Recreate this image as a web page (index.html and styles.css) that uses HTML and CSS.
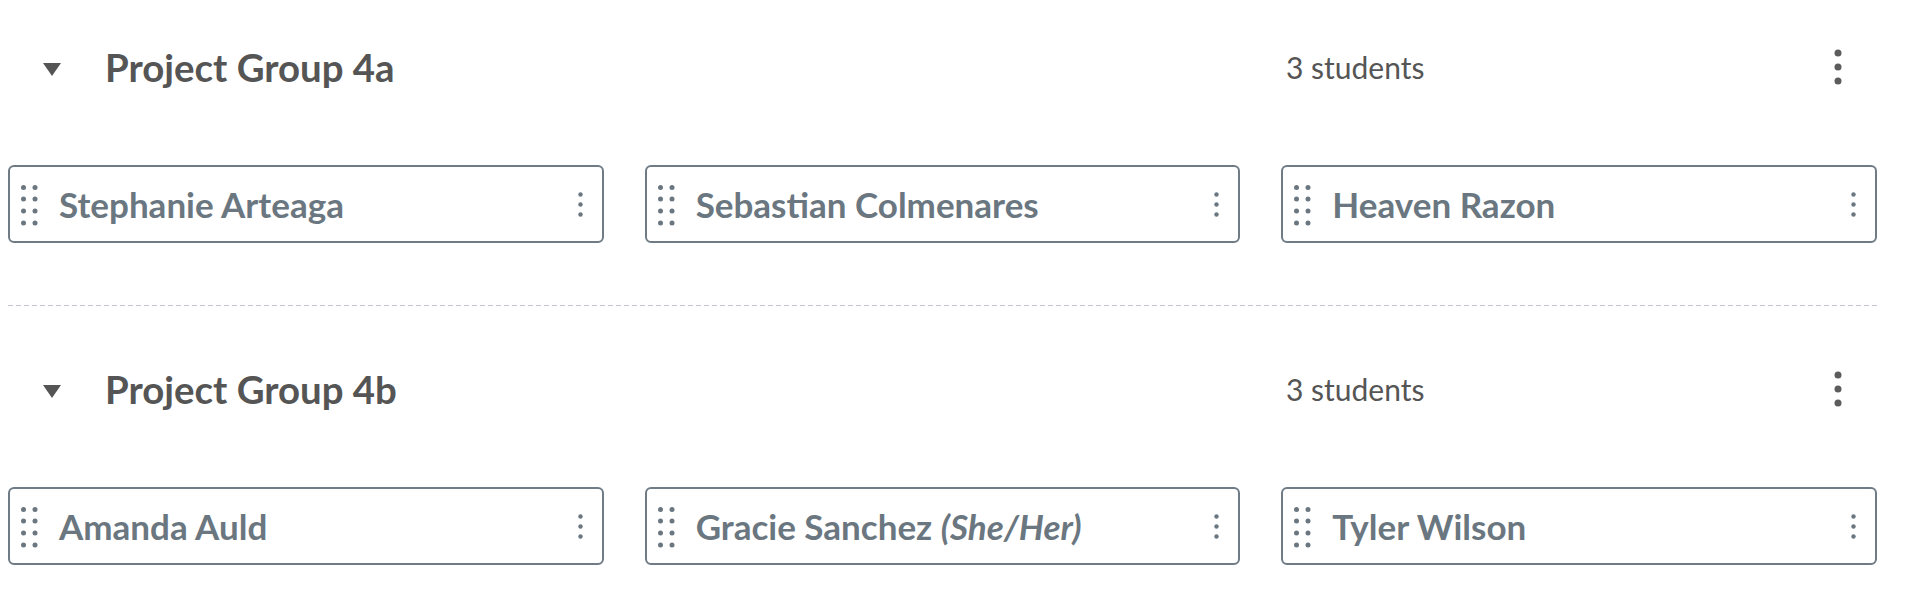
FILE: index.html
```html
<!DOCTYPE html>
<html lang="en">
<head>
<meta charset="utf-8">
<title>Groups</title>
<link rel="stylesheet" href="styles.css">
</head>
<body>
<div class="groups">
  <section class="group">
    <div class="group-header">
      <span class="toggle"><svg width="18" height="13" viewBox="0 0 18 13"><path d="M0 0H18L9 13Z" fill="#555"/></svg></span>
      <h2 class="group-title">Project Group 4a</h2>
      <span class="count">3 students</span>
      <span class="kebab-lg"><svg width="8" height="36" viewBox="0 0 8 36"><circle cx="4" cy="4" r="3.5"/><circle cx="4" cy="18" r="3.5"/><circle cx="4" cy="32" r="3.5"/></svg></span>
    </div>
    <div class="members">
      <div class="member">
        <span class="handle"><svg width="17" height="41" viewBox="0 0 17 41"><circle cx="2.5" cy="2.5" r="2.5"/><circle cx="14" cy="2.5" r="2.5"/><circle cx="2.5" cy="14" r="2.5"/><circle cx="14" cy="14" r="2.5"/><circle cx="2.5" cy="26" r="2.5"/><circle cx="14" cy="26" r="2.5"/><circle cx="2.5" cy="38" r="2.5"/><circle cx="14" cy="38" r="2.5"/></svg></span>
        <span class="name">Stephanie Arteaga</span>
        <span class="kebab-sm"><svg width="5" height="25" viewBox="0 0 5 25"><circle cx="2.5" cy="2.5" r="2.2"/><circle cx="2.5" cy="12.5" r="2.2"/><circle cx="2.5" cy="22.5" r="2.2"/></svg></span>
      </div>
      <div class="member">
        <span class="handle"><svg width="17" height="41" viewBox="0 0 17 41"><circle cx="2.5" cy="2.5" r="2.5"/><circle cx="14" cy="2.5" r="2.5"/><circle cx="2.5" cy="14" r="2.5"/><circle cx="14" cy="14" r="2.5"/><circle cx="2.5" cy="26" r="2.5"/><circle cx="14" cy="26" r="2.5"/><circle cx="2.5" cy="38" r="2.5"/><circle cx="14" cy="38" r="2.5"/></svg></span>
        <span class="name">Sebastian Colmenares</span>
        <span class="kebab-sm"><svg width="5" height="25" viewBox="0 0 5 25"><circle cx="2.5" cy="2.5" r="2.2"/><circle cx="2.5" cy="12.5" r="2.2"/><circle cx="2.5" cy="22.5" r="2.2"/></svg></span>
      </div>
      <div class="member">
        <span class="handle"><svg width="17" height="41" viewBox="0 0 17 41"><circle cx="2.5" cy="2.5" r="2.5"/><circle cx="14" cy="2.5" r="2.5"/><circle cx="2.5" cy="14" r="2.5"/><circle cx="14" cy="14" r="2.5"/><circle cx="2.5" cy="26" r="2.5"/><circle cx="14" cy="26" r="2.5"/><circle cx="2.5" cy="38" r="2.5"/><circle cx="14" cy="38" r="2.5"/></svg></span>
        <span class="name">Heaven Razon</span>
        <span class="kebab-sm"><svg width="5" height="25" viewBox="0 0 5 25"><circle cx="2.5" cy="2.5" r="2.2"/><circle cx="2.5" cy="12.5" r="2.2"/><circle cx="2.5" cy="22.5" r="2.2"/></svg></span>
      </div>
    </div>
  </section>
  <div class="divider"></div>
  <section class="group">
    <div class="group-header">
      <span class="toggle"><svg width="18" height="13" viewBox="0 0 18 13"><path d="M0 0H18L9 13Z" fill="#555"/></svg></span>
      <h2 class="group-title">Project Group 4b</h2>
      <span class="count">3 students</span>
      <span class="kebab-lg"><svg width="8" height="36" viewBox="0 0 8 36"><circle cx="4" cy="4" r="3.5"/><circle cx="4" cy="18" r="3.5"/><circle cx="4" cy="32" r="3.5"/></svg></span>
    </div>
    <div class="members">
      <div class="member">
        <span class="handle"><svg width="17" height="41" viewBox="0 0 17 41"><circle cx="2.5" cy="2.5" r="2.5"/><circle cx="14" cy="2.5" r="2.5"/><circle cx="2.5" cy="14" r="2.5"/><circle cx="14" cy="14" r="2.5"/><circle cx="2.5" cy="26" r="2.5"/><circle cx="14" cy="26" r="2.5"/><circle cx="2.5" cy="38" r="2.5"/><circle cx="14" cy="38" r="2.5"/></svg></span>
        <span class="name">Amanda Auld</span>
        <span class="kebab-sm"><svg width="5" height="25" viewBox="0 0 5 25"><circle cx="2.5" cy="2.5" r="2.2"/><circle cx="2.5" cy="12.5" r="2.2"/><circle cx="2.5" cy="22.5" r="2.2"/></svg></span>
      </div>
      <div class="member">
        <span class="handle"><svg width="17" height="41" viewBox="0 0 17 41"><circle cx="2.5" cy="2.5" r="2.5"/><circle cx="14" cy="2.5" r="2.5"/><circle cx="2.5" cy="14" r="2.5"/><circle cx="14" cy="14" r="2.5"/><circle cx="2.5" cy="26" r="2.5"/><circle cx="14" cy="26" r="2.5"/><circle cx="2.5" cy="38" r="2.5"/><circle cx="14" cy="38" r="2.5"/></svg></span>
        <span class="name">Gracie Sanchez <em class="pronouns">(She/Her)</em></span>
        <span class="kebab-sm"><svg width="5" height="25" viewBox="0 0 5 25"><circle cx="2.5" cy="2.5" r="2.2"/><circle cx="2.5" cy="12.5" r="2.2"/><circle cx="2.5" cy="22.5" r="2.2"/></svg></span>
      </div>
      <div class="member">
        <span class="handle"><svg width="17" height="41" viewBox="0 0 17 41"><circle cx="2.5" cy="2.5" r="2.5"/><circle cx="14" cy="2.5" r="2.5"/><circle cx="2.5" cy="14" r="2.5"/><circle cx="14" cy="14" r="2.5"/><circle cx="2.5" cy="26" r="2.5"/><circle cx="14" cy="26" r="2.5"/><circle cx="2.5" cy="38" r="2.5"/><circle cx="14" cy="38" r="2.5"/></svg></span>
        <span class="name">Tyler Wilson</span>
        <span class="kebab-sm"><svg width="5" height="25" viewBox="0 0 5 25"><circle cx="2.5" cy="2.5" r="2.2"/><circle cx="2.5" cy="12.5" r="2.2"/><circle cx="2.5" cy="22.5" r="2.2"/></svg></span>
      </div>
    </div>
  </section>
</div>
</body>
</html>
```

FILE: styles.css
```css
html, body {
  margin: 0;
  padding: 0;
  background: #ffffff;
}

body {
  font-family: Lato, "Open Sans", "Liberation Sans", sans-serif;
}

.groups {
  padding: 0 41px 0 8px;
}

.group {
  padding-top: 53px;
  padding-bottom: 62px;
}

.group:first-child {
  padding-top: 37px;
}

.group-header {
  height: 60px;
  display: flex;
  align-items: center;
  padding-left: 35px;
  padding-right: 27px;
  margin-bottom: 68px;
}

.toggle {
  width: 18px;
  height: 13px;
  display: flex;
  margin-top: 5px;
  margin-right: 44px;
}

.group-title {
  flex: 1;
  margin: 0;
  font-size: 38.4px;
  font-weight: 700;
  color: #555555;
}

.count {
  width: 540px;
  font-size: 30px;
  font-weight: 400;
  color: #555555;
}

.kebab-lg {
  width: 24px;
  display: flex;
  justify-content: center;
  fill: #5c5c5c;
}

.members {
  display: grid;
  grid-template-columns: repeat(3, 1fr);
  column-gap: 41px;
}

.member {
  box-sizing: border-box;
  height: 78px;
  border: 2px solid #6f7b85;
  border-radius: 6px;
  display: flex;
  align-items: center;
  padding: 0 19px 0 11px;
}

.handle {
  display: flex;
  fill: #6b7780;
  margin-top: 3px;
  margin-right: 21px;
}

.name {
  flex: 1;
  font-size: 35px;
  font-weight: 700;
  color: #6b7780;
  white-space: nowrap;
}

.pronouns {
  font-style: italic;
}

.kebab-sm {
  display: flex;
  fill: #6b7780;
}

.divider {
  height: 1px;
  background-image: repeating-linear-gradient(to right, #c2c8cd 0 5px, transparent 5px 8px);
}
```
